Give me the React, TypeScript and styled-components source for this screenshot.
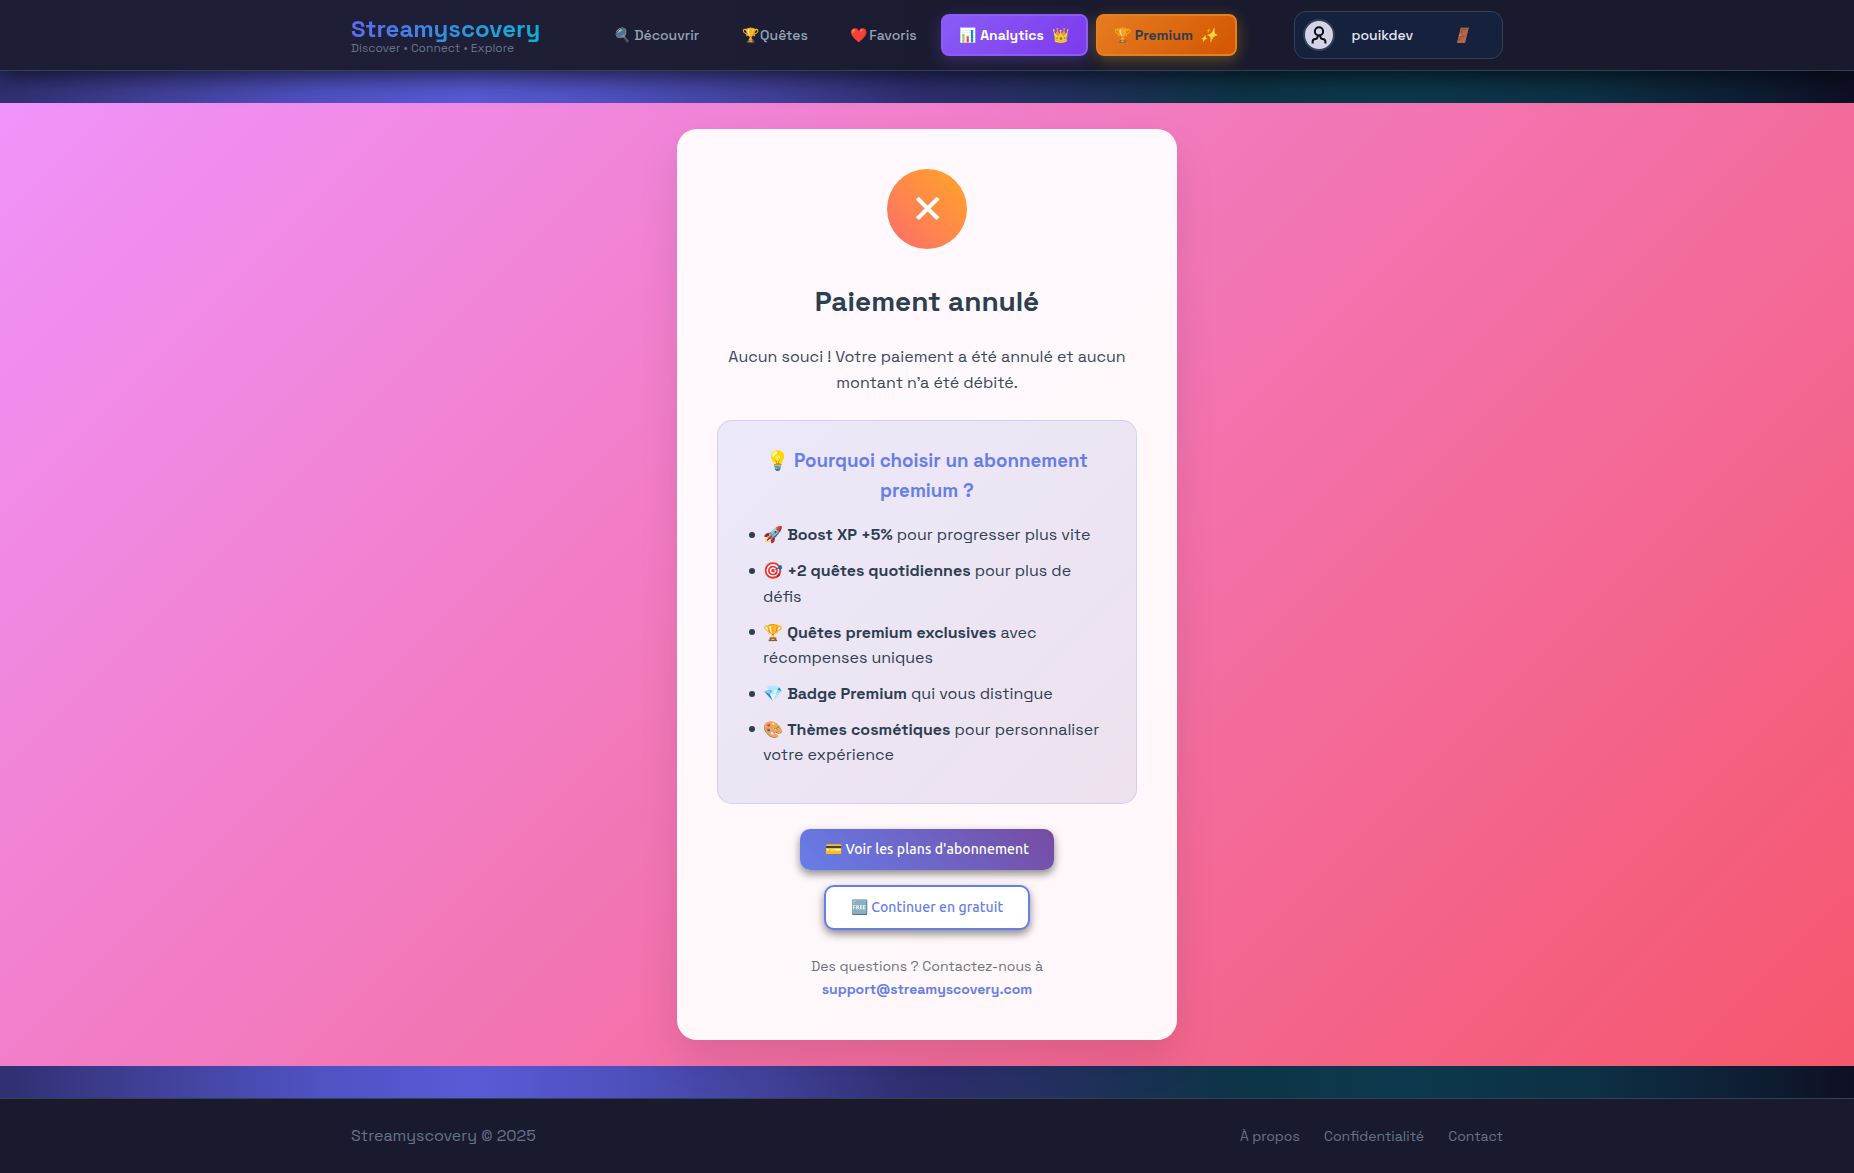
import React from 'react';
import styled, { createGlobalStyle, css } from 'styled-components';

const GlobalStyle = createGlobalStyle`
  *, *::before, *::after { box-sizing: border-box; }
  body {
    margin: 0;
    overflow: hidden;
    font-family: 'Space Grotesk', Inter, 'Liberation Sans', sans-serif;
    font-size: 16px;
    line-height: 1.6;
    color: #e2e8f0;
    background: #0f0f23;
  }
  h1, h2, h3, p, ul { margin: 0; }
  a { text-decoration: none; color: inherit; }
`;

const Page = styled.div`
  display: flex;
  flex-direction: column;
  min-height: 1173px;
  background: linear-gradient(
    90deg,
    #2f2f72 0%, #3e3e92 7%, #5051c2 17%, #5a5ad6 25.5%, #5050c0 33%,
    #41419a 41.5%, #2f2e70 49.5%, #243060 57%, #15324f 63%, #0d3447 67%,
    #0c394d 75.5%, #0d3044 86%, #0e1a30 96%, #0f0f23 100%
  );
`;

const Header = styled.header`
  position: relative;
  height: 71px;
  background: linear-gradient(90deg, #1d1d35, #1e1e36 25%, #1a1a2e 60%, #1a1a2d);
  border-bottom: 1px solid #334155;
  box-shadow: 0 4px 26px rgba(0, 0, 0, 0.75);
`;

const Bar = styled.div`
  display: flex;
  align-items: center;
  width: 1152px;
  height: 70px;
  margin: 0 auto;
`;

const Brand = styled.a`
  display: flex;
  flex-direction: column;
  width: 189px;
  padding-top: 3px;
`;

const BrandName = styled.span`
  font-size: 24px;
  font-weight: 700;
  line-height: 26px;
  padding-bottom: 2px;
  background: linear-gradient(135deg, #6366f1, #06b6d4);
  background-clip: text;
  -webkit-background-clip: text;
  color: transparent;
`;

const Tagline = styled.span`
  margin-top: -5px;
  font-size: 12px;
  line-height: 19px;
  color: #64748b;
`;

const Nav = styled.nav`
  display: flex;
  align-items: center;
  gap: 8px;
  margin-left: 54.6px;
`;

type Tone = 'plain' | 'violet' | 'amber';

const tones = {
  plain: css`
    padding-right: 14.5px;
    color: #94a3b8;
    font-weight: 500;
  `,
  violet: css`
    padding-right: 17px;
    color: #fff;
    font-weight: 600;
    border-color: #8b5cf6;
    background: linear-gradient(135deg, #8b5cf6, #7c3aed) border-box;
    box-shadow: 0 4px 15px rgba(139, 92, 246, 0.3);
  `,
  amber: css`
    padding-right: 18px;
    color: #2c3e50;
    font-weight: 600;
    border-color: #e67e22;
    background: linear-gradient(135deg, #e67e22, #d35400) border-box;
    box-shadow: 0 4px 15px rgba(255, 193, 7, 0.3);
  `,
};

const NavLink = styled.a<{ $tone: Tone; $gap: number }>`
  display: flex;
  align-items: center;
  gap: ${(p) => p.$gap}px;
  padding: 8px 16px;
  border: 2px solid transparent;
  border-radius: 8px;
  font-size: 14px;
  line-height: 22.4px;
  white-space: nowrap;
  ${(p) => tones[p.$tone]}
`;

const Slanted = styled.i<{ $faded?: boolean }>`
  opacity: ${(p) => (p.$faded ? 0.8 : 1)};
`;

const Tail = styled.span<{ $offset: number }>`
  margin-left: ${(p) => p.$offset}px;
`;

const UserBox = styled.div`
  display: flex;
  align-items: center;
  width: 209px;
  height: 48px;
  margin-left: auto;
  padding-left: 8px;
  border: 1px solid #334155;
  border-radius: 12px;
  background: #16213e;
  font-size: 14px;
  font-weight: 500;
  color: #e2e8f0;
`;

const Avatar = styled.span`
  display: grid;
  place-items: center;
  width: 32px;
  height: 32px;
  border: 2px solid #334155;
  border-radius: 50%;
  background: #d5d3e8;
`;

const UserName = styled.span`
  width: 101.5px;
  margin-left: 16.5px;
`;

const Main = styled.main`
  padding: 32px 0;
`;

const Stage = styled.section`
  display: flex;
  justify-content: center;
  align-items: center;
  height: 963px;
  background: linear-gradient(135deg, #f093fb 0%, #f5576c 100%);
`;

const Card = styled.article`
  display: flex;
  flex-direction: column;
  align-items: center;
  width: 500px;
  height: 911px;
  padding: 40px;
  border-radius: 20px;
  background: rgba(255, 255, 255, 0.95);
  box-shadow: 0 20px 40px rgba(0, 0, 0, 0.1);
  text-align: center;
`;

const StatusIcon = styled.div`
  display: grid;
  place-items: center;
  width: 80px;
  height: 80px;
  flex: none;
  padding: 2px 0 0 1px;
  border-radius: 50%;
  background: linear-gradient(45deg, #ff6b6b, #ffa726);
  color: #fff;
  font-size: 40px;
  font-weight: 400;
  line-height: 42px;
`;

const Title = styled.h1`
  margin-top: 30px;
  font-size: 28px;
  line-height: 44.8px;
  color: #2c3e50;
`;

const Lead = styled.p`
  margin-top: 20px;
  line-height: 26px;
  color: #34495e;
`;

const Panel = styled.section`
  width: 100%;
  margin-top: 24.4px;
  padding: 25px 25px 24.5px;
  border: 1px solid rgba(102, 126, 234, 0.2);
  border-radius: 15px;
  background: linear-gradient(135deg, rgba(102, 126, 234, 0.13), rgba(118, 75, 162, 0.13));
`;

const PanelTitle = styled.h3`
  margin-bottom: 16.4px;
  font-size: 18.72px;
  font-weight: 600;
  line-height: 29.95px;
  color: #667eea;
`;

const Perks = styled.ul`
  padding-left: 20px;
  text-align: left;
  list-style: none;
  color: #2c3e50;
`;

const Perk = styled.li`
  margin-bottom: 10.1px;
  line-height: 25.65px;

  &::before {
    content: '';
    display: inline-block;
    width: 6px;
    height: 6px;
    margin: 0 8px 2.5px -14px;
    border-radius: 50%;
    background: currentColor;
  }
`;

const Actions = styled.div`
  display: flex;
  flex-direction: column;
  align-items: center;
  gap: 15px;
  margin-top: 25px;
`;

const Button = styled.button<{ $outline?: boolean }>`
  padding: 12px 25px;
  border: ${(p) => (p.$outline ? '2px solid #667eea' : '0')};
  border-radius: 10px;
  background: ${(p) => (p.$outline ? '#fff' : 'linear-gradient(45deg, #667eea, #764ba2)')};
  box-shadow: 0 4px 8px rgba(0, 0, 0, 0.45);
  color: ${(p) => (p.$outline ? '#667eea' : '#fff')};
  font-family: Ubuntu, 'Open Sans', sans-serif;
  font-size: 14px;
  font-weight: 500;
  line-height: 17px;
  letter-spacing: 0.08px;
`;

const Help = styled.p`
  margin-top: 25px;
  font-size: 14px;
  line-height: 22.9px;
  color: #6c757d;
`;

const MailLink = styled.a`
  display: block;
  font-weight: 600;
  color: #667eea;
`;

const Footer = styled.footer`
  flex: 1;
  border-top: 1px solid #334155;
  background: #1a1a2e;
  color: #64748b;
`;

const FooterRow = styled.div`
  display: flex;
  align-items: center;
  justify-content: space-between;
  width: 1152px;
  margin: 0 auto;
  padding-top: 24px;
`;

const FooterLinks = styled.div`
  display: flex;
  gap: 24px;
  font-size: 14px;
`;

const perks = [
  ['🚀', 'Boost XP +5%', 'pour progresser plus vite'],
  ['🎯', '+2 quêtes quotidiennes', 'pour plus de défis'],
  ['🏆', 'Quêtes premium exclusives', 'avec récompenses uniques'],
  ['💎', 'Badge Premium', 'qui vous distingue'],
  ['🎨', 'Thèmes cosmétiques', 'pour personnaliser votre expérience'],
];

export default function App() {
  return (
    <>
      <GlobalStyle />
      <Page>
        <Header>
          <Bar>
            <Brand>
              <BrandName>Streamyscovery</BrandName>
              <Tagline>Discover • Connect • Explore</Tagline>
            </Brand>
            <Nav>
              <NavLink $tone="plain" $gap={4.6}><Slanted $faded>🔍</Slanted>Découvrir</NavLink>
              <NavLink $tone="plain" $gap={1.4}><span>🏆</span>Quêtes</NavLink>
              <NavLink $tone="plain" $gap={2}><span>❤️</span>Favoris</NavLink>
              <NavLink $tone="violet" $gap={4}><span>📊</span>Analytics<Tail $offset={4}>👑</Tail></NavLink>
              <NavLink $tone="amber" $gap={4}><Slanted as="span" $faded>🏆</Slanted>Premium<Tail $offset={3}><i>✨</i></Tail></NavLink>
            </Nav>
            <UserBox>
              <Avatar>
                <svg width="18" height="18" viewBox="0 0 18 18" fill="none" stroke="#0b0b12" strokeWidth="2">
                  <circle cx="9" cy="5.4" r="4.1" />
                  <path d="M2.6 17.4v-1.6q0-2.8 2.8-2.8 2 0 2.6-3.4h2q.6 3.4 2.6 3.4 2.8 0 2.8 2.8v1.6" />
                </svg>
              </Avatar>
              <UserName>pouikdev</UserName>
              <Slanted>🚪</Slanted>
            </UserBox>
          </Bar>
        </Header>
        <Main>
          <Stage>
            <Card>
              <StatusIcon>✕</StatusIcon>
              <Title>Paiement annulé</Title>
              <Lead>Aucun souci ! Votre paiement a été annulé et aucun montant n’a été débité.</Lead>
              <Panel>
                <PanelTitle>💡 Pourquoi choisir un abonnement premium ?</PanelTitle>
                <Perks>
                  {perks.map(([icon, name, text]) => (
                    <Perk key={name}>{icon} <strong>{name}</strong> {text}</Perk>
                  ))}
                </Perks>
              </Panel>
              <Actions>
                <Button>💳 Voir les plans d'abonnement</Button>
                <Button $outline>🆓 Continuer en gratuit</Button>
              </Actions>
              <Help>
                Des questions ? Contactez-nous à
                <MailLink>support@streamyscovery.com</MailLink>
              </Help>
            </Card>
          </Stage>
        </Main>
        <Footer>
          <FooterRow>
            <span>Streamyscovery © 2025</span>
            <FooterLinks>
              <a>À propos</a>
              <a>Confidentialité</a>
              <a>Contact</a>
            </FooterLinks>
          </FooterRow>
        </Footer>
      </Page>
    </>
  );
}
